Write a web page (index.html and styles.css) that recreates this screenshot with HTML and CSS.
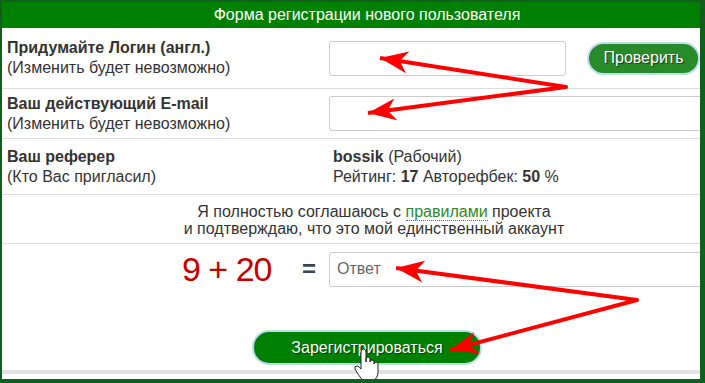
FILE: index.html
```html
<!DOCTYPE html>
<html lang="ru">
<head>
	<meta charset="UTF-8">
	<title>Регистрация</title>
	<link rel="stylesheet" href="styles.css">
</head>
<body>
	<!-- форма регистрации -->
	<div class="frame">
		<div class="form">
			<div class="head">Форма регистрации нового пользователя</div>

			<div class="row r1">
				<div class="lbl"><b>Придумайте Логин (англ.)</b><br>(Изменить будет невозможно)</div>
				<div class="fld">
					<input type="text" class="inp short">
					<button class="btn check">Проверить</button>
				</div>
			</div>

			<div class="row r2">
				<div class="lbl"><b>Ваш действующий E-mail</b><br>(Изменить будет невозможно)</div>
				<div class="fld"><input type="text" class="inp long"></div>
			</div>

			<div class="row r3">
				<div class="lbl"><b>Ваш реферер</b><br>(Кто Вас пригласил)</div>
				<div class="txt"><b>bossik</b> (Рабочий)<br>Рейтинг: <b>17</b> Авторефбек: <b>50</b> %</div>
			</div>

			<div class="row agree">
				Я полностью соглашаюсь с <a href="#">правилами</a> проекта<br>
				и подтверждаю, что это мой единственный аккаунт
			</div>

			<div class="captcha">
				<div class="sum">9 + 20</div>
				<div class="eq">=</div>
				<input type="text" class="inp long" placeholder="Ответ">
			</div>

			<div class="submit">
				<button class="btn reg">Зарегистрироваться</button>
			</div>
		</div>

		<!-- стрелки поверх формы -->
		<svg class="arrows" width="705" height="383" viewBox="0 0 705 383">
			<defs>
				<marker id="head" markerUnits="userSpaceOnUse" markerWidth="32" markerHeight="26" refX="28" refY="13" orient="auto-start-reverse">
					<path d="M28 13 L0 2 L8 13 L0 24 Z" fill="#f00"/>
				</marker>
			</defs>
			<polyline points="380,58 566,87 368,113" fill="none" stroke="#f00" stroke-width="4" stroke-linejoin="round" marker-start="url(#head)" marker-end="url(#head)"/>
			<polyline points="396,268 637,300 450,350" fill="none" stroke="#f00" stroke-width="4" stroke-linejoin="round" marker-start="url(#head)" marker-end="url(#head)"/>
			<!-- курсор -->
			<path d="M361 366 L361 352 Q361 349 363.5 349 Q366 349 366 352 L366 362 L366 359 Q366 357 368 357 Q370 357 370 359 L370 362 Q370 360 372 360 Q374 360 374 362 L374 364 Q374 362 376 362 Q378 362 378 364 L378 372 Q378 378 373 381 L364 381 Q361 379 358 374 L355 369 Q354 366 357 366 Q359 366 361 369 Z" fill="#fff" stroke="#222" stroke-width="1"/>
		</svg>
	</div>
</body>
</html>
```

FILE: styles.css
```css
body{
	margin:0;
	padding:0;
	font-family:"Liberation Sans", Arial, sans-serif;
	color:#333;
}
.frame{
	position:relative;
	width:698px;
	height:377px;
	border:solid #115e1d;
	border-width:2px 5px 4px 2px;
	overflow:hidden;
	background:#fff;
}
.form{
	width:736px;
	font-size:16px;
}
.head{
	height:26px;
	line-height:26px;
	background:#008000;
	color:#fff;
	text-align:center;
	font-size:16px;
	padding-right:6px;
}
.row{
	display:flex;
	align-items:center;
	border-bottom:1px solid #ddd;
	line-height:20px;
}
.r1{ height:60px; }
.r2{ height:49px; }
.r3{ height:55px; }
.lbl{
	width:322px;
	padding-left:5px;
}
.fld{
	display:flex;
	align-items:center;
}
.txt{
	padding-left:4px;
}
.inp{
	height:35px;
	box-sizing:border-box;
	border:1px solid #ccc;
	border-radius:3px;
	font-family:"Liberation Sans", Arial, sans-serif;
	font-size:16px;
	padding:0 7px;
	color:#555;
}
.inp::placeholder{
	color:#666;
}
.short{ width:237px; }
.long{ width:400px; }
.btn{
	font-family:"Liberation Sans", Arial, sans-serif;
	color:#fff;
	border:2px solid #bcdcf0;
	border-radius:17px;
	text-shadow:1px 1px 1px rgba(0,0,0,.55);
	cursor:pointer;
}
.check{
	margin-left:21px;
	width:113px;
	height:33px;
	font-size:16px;
	background:#288a28;
}
.agree{
	height:49px;
	display:block;
	text-align:center;
	line-height:17px;
	box-sizing:border-box;
	padding-top:8px;
	padding-left:8px;
}
.agree a{
	color:#2a8a2a;
	text-decoration:none;
	border-bottom:1px dotted #3a6aa0;
}
.captcha{
	display:flex;
	align-items:center;
	padding-top:7px;
	height:36px;
}
.sum{
	margin-left:180px;
	font-size:34px;
	color:#c40000;
	letter-spacing:-1px;
	width:120px;
}
.eq{
	font-size:24px;
	font-weight:bold;
	color:#3a4652;
	width:27px;
}
.submit{
	height:87px;
	display:flex;
	justify-content:center;
	border-bottom:4px solid #e2e2e2;
	box-sizing:border-box;
	padding-top:43px;
	padding-right:6px;
}
.reg{
	width:230px;
	height:35px;
	font-size:16px;
	background:#008000;
}
.arrows{
	position:absolute;
	left:-2px;
	top:-2px;
}
```
